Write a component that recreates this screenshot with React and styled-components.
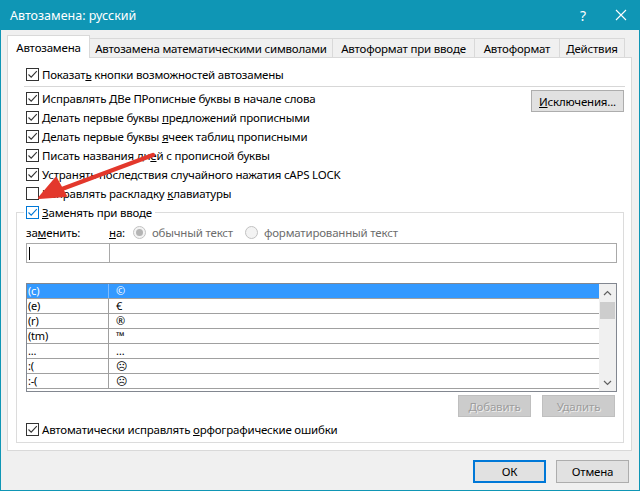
import React from 'react'
import styled, { createGlobalStyle } from 'styled-components'

const GlobalStyle = createGlobalStyle`
  html, body { margin: 0; padding: 0; background: #ffffff; }
  body {
    font-family: "Noto Sans", "Open Sans", sans-serif;
    font-size: 11.5px;
    letter-spacing: -0.2px;
    color: #000;
  }
  * { box-sizing: border-box; }
`

const Window = styled.div`
  width: 640px;
  height: 491px;
  display: flex;
  flex-direction: column;
  position: relative;
`

const TitleBar = styled.div`
  height: 30px;
  flex: none;
  background: #0f96b5;
  color: #fff;
  display: flex;
  align-items: center;
  padding-left: 10px;
  font-size: 12.5px;
  letter-spacing: 0;
`

const TitleText = styled.div`
  flex: 1;
`

const TitleButton = styled.div`
  width: 38px;
  height: 30px;
  display: flex;
  align-items: center;
  justify-content: center;
  font-size: 14px;
`

const Frame = styled.div`
  flex: 1;
  border: 1px solid #0f96b5;
  border-top: none;
  background: #f0f0f0;
  padding: 5px 7px 0 6px;
  display: flex;
  flex-direction: column;
`

const TabStrip = styled.div`
  display: flex;
  align-items: flex-end;
  height: 23px;
  position: relative;
  z-index: 1;
`

const Tab = styled.div`
  width: ${p => p.$w}px;
  height: ${p => (p.$active ? 23 : 20)}px;
  background: ${p => (p.$active ? '#fff' : '#f0f0f0')};
  border: 1px solid #d9d9d9;
  border-bottom: ${p => (p.$active ? 'none' : '1px solid #d9d9d9')};
  margin-left: ${p => (p.$first ? 0 : -1)}px;
  display: flex;
  align-items: center;
  justify-content: center;
  padding-top: ${p => (p.$active ? 0 : 1)}px;
  white-space: nowrap;
`

const Panel = styled.div`
  margin-top: -1px;
  height: 394px;
  background: #fff;
  border: 1px solid #d9d9d9;
  display: flex;
  flex-direction: column;
  position: relative;
`

const TopSection = styled.div`
  padding: 7px 6px 0 16px;
`

const Divider = styled.div`
  height: 1px;
  background: #d7d7d7;
  margin-top: 2px;
`

const Options = styled.div`
  margin-top: 2px;
  display: flex;
  justify-content: space-between;
  align-items: flex-start;
`

const OptionList = styled.div`
  display: flex;
  flex-direction: column;
`

const Row = styled.label`
  height: 19px;
  display: flex;
  align-items: center;
  padding-left: 2px;
  white-space: nowrap;
`

const Box = styled.span`
  width: 13px;
  height: 13px;
  flex: none;
  border: 1px solid ${p => (p.$accent ? '#0078d7' : '#333')};
  background: #fff;
  margin-right: 3px;
  display: flex;
  align-items: center;
  justify-content: center;
`

const Button = styled.div`
  width: ${p => p.$w}px;
  height: ${p => p.$h || 22}px;
  display: flex;
  align-items: center;
  justify-content: center;
  background: ${p => (p.$disabled ? '#cccccc' : '#e1e1e1')};
  border: ${p => (p.$default ? '2px solid #0078d7' : p.$disabled ? '1px solid #bfbfbf' : '1px solid #adadad')};
  color: ${p => (p.$disabled ? '#9d9d9d' : '#000')};
  text-shadow: ${p => (p.$disabled ? '1px 1px 0 #eeeeee' : 'none')};
  margin-top: ${p => p.$mt || 0}px;
  margin-right: ${p => p.$mr || 0}px;
`

const Group = styled.fieldset`
  margin: 0 7px 8px 8px;
  padding: 0 6px 3px 9px;
  border: 1px solid #dcdcdc;
  flex: 1;
  min-width: 0;
  display: flex;
  flex-direction: column;
`

const Legend = styled.legend`
  padding: 0 3px 0 2px;
  margin-left: -2px;
  height: 18px;
  display: flex;
  align-items: center;
`

const LabelRow = styled.div`
  height: 18px;
  margin-top: 2px;
  display: flex;
  align-items: center;
  white-space: nowrap;
`

const FieldLabel = styled.span`
  width: ${p => p.$w}px;
  flex: none;
`

const Radio = styled.span`
  width: 13px;
  height: 13px;
  border-radius: 50%;
  border: 1px solid #c2c2c2;
  background: #f3f3f3;
  margin: 0 6px 0 ${p => p.$ml}px;
  display: flex;
  align-items: center;
  justify-content: center;
  &::after {
    content: '';
    width: 7px;
    height: 7px;
    border-radius: 50%;
    background: ${p => (p.$on ? '#b4b4b4' : 'transparent')};
  }
`

const Muted = styled.span`
  color: #6d6d6d;
`

const Inputs = styled.div`
  margin-top: 2px;
  height: 20px;
  display: flex;
`

const Input = styled.div`
  height: 20px;
  width: ${p => (p.$w ? `${p.$w}px` : 'auto')};
  flex: ${p => (p.$w ? 'none' : 1)};
  border: 1px solid #a9a9a9;
  margin-left: ${p => (p.$join ? -1 : 0)}px;
  background: #fff;
  display: flex;
  align-items: center;
  padding-left: 2px;
`

const Caret = styled.span`
  width: 1px;
  height: 13px;
  background: #000;
`

const List = styled.div`
  margin-top: 20px;
  height: 109px;
  border: 1px solid #828790;
  display: flex;
  overflow: hidden;
`

const Rows = styled.div`
  flex: 1;
`

const ListRow = styled.div`
  height: 15px;
  display: flex;
  border-bottom: 1px solid #a0a0a0;
  background: ${p => (p.$selected ? '#3399ff' : '#fff')};
  color: ${p => (p.$selected ? '#fff' : '#000')};
  font-size: 11px;
  line-height: 14px;
  overflow: hidden;
`

const Cell = styled.div`
  width: ${p => (p.$w ? `${p.$w}px` : 'auto')};
  flex: ${p => (p.$w ? 'none' : 1)};
  padding-left: ${p => p.$pl}px;
  border-right: ${p => (p.$w ? `1px solid ${p.$sel ? '#7fbcff' : '#a0a0a0'}` : 'none')};
`

const Scrollbar = styled.div`
  width: 17px;
  flex: none;
  background: #f0f0f0;
  display: flex;
  flex-direction: column;
  align-items: center;
`

const ScrollArrow = styled.div`
  height: 17px;
  display: flex;
  align-items: center;
  justify-content: center;
`

const Thumb = styled.div`
  width: 15px;
  height: 17px;
  background: #cdcdcd;
  margin-top: 1px;
`

const Spacer = styled.div`
  flex: 1;
`

const ButtonRow = styled.div`
  display: flex;
  justify-content: flex-end;
  gap: 11px;
  margin-top: 3px;
  padding-right: 2px;
`

const BottomRow = styled(Row)`
  margin-top: 3px;
  padding-left: 0;
`

const Footer = styled.div`
  display: flex;
  justify-content: flex-end;
  gap: 10px;
  margin-top: 9px;
  padding-right: 3px;
`

const Arrow = styled.svg`
  position: absolute;
  left: 0;
  top: 0;
  pointer-events: none;
`

const Check = ({ on = true, accent }) => (
  <Box $accent={accent}>
    {on && (
      <svg width="11" height="11" viewBox="0 0 11 11">
        <path d="M1.5 5.5 L4.2 8.2 L9.8 2.2" fill="none" stroke={accent ? '#0078d7' : '#333'} strokeWidth="1.1" />
      </svg>
    )}
  </Box>
)

const Option = ({ on, accent, children }) => (
  <Row>
    <Check on={on} accent={accent} />
    <span>{children}</span>
  </Row>
)

const entries = [
  ['(c)', '©'],
  ['(e)', '€'],
  ['(r)', '®'],
  ['(tm)', '™'],
  ['...', '…'],
  [':(', '☹'],
  [':-(', '☹'],
]

const tabs = [
  ['Автозамена', 83],
  ['Автозамена математическими символами', 244],
  ['Автоформат при вводе', 143],
  ['Автоформат', 86],
  ['Действия', 66],
]

export default function App() {
  return (
    <>
      <GlobalStyle />
      <Window>
        <TitleBar>
          <TitleText>Автозамена: русский</TitleText>
          <TitleButton>?</TitleButton>
          <TitleButton>
            <svg width="12" height="12" viewBox="0 0 12 12">
              <path d="M1 1 L11 11 M11 1 L1 11" stroke="#fff" strokeWidth="1.1" />
            </svg>
          </TitleButton>
        </TitleBar>
        <Frame>
          <TabStrip>
            {tabs.map(([t, w], i) => (
              <Tab key={t} $w={w} $active={i === 0} $first={i === 0}>{t}</Tab>
            ))}
          </TabStrip>
          <Panel>
            <TopSection>
              <Option on>Показат<u>ь</u> кнопки возможностей автозамены</Option>
              <Divider />
              <Options>
                <OptionList>
                  <Option on>Исправлять ДВе ПРописные буквы в начале слова</Option>
                  <Option on>Делать первые буквы <u>п</u>редложений прописными</Option>
                  <Option on>Делать первые буквы <u>я</u>чеек таблиц прописными</Option>
                  <Option on>Писать названия дн<u>е</u>й с прописной буквы</Option>
                  <Option on>Устранять после<u>д</u>ствия случайного нажатия cAPS LOCK</Option>
                  <Option on={false}>Исправлять раскладку <u>к</u>лавиатуры</Option>
                </OptionList>
                <Button $w={93} $mt={1} $mr={1}><span><u>И</u>сключения...</span></Button>
              </Options>
            </TopSection>
            <Group>
              <Legend>
                <Check accent />
                <span><u>З</u>аменять при вводе</span>
              </Legend>
              <LabelRow>
                <FieldLabel $w={83}>за<u>м</u>енить:</FieldLabel>
                <span><u>н</u>а:</span>
                <Radio $on $ml={8} />
                <Muted>обычный текст</Muted>
                <Radio $ml={12} />
                <Muted>форматированный текст</Muted>
              </LabelRow>
              <Inputs>
                <Input $w={84}><Caret /></Input>
                <Input $join />
              </Inputs>
              <List>
                <Rows>
                  {entries.map(([a, b], i) => (
                    <ListRow key={a} $selected={i === 0}>
                      <Cell $w={82} $pl={1} $sel={i === 0}>{a}</Cell>
                      <Cell $pl={7}>{b}</Cell>
                    </ListRow>
                  ))}
                </Rows>
                <Scrollbar>
                  <ScrollArrow>
                    <svg width="9" height="6" viewBox="0 0 9 6">
                      <path d="M1 5 L4.5 1.5 L8 5" fill="none" stroke="#606060" strokeWidth="1.2" />
                    </svg>
                  </ScrollArrow>
                  <Thumb />
                  <Spacer />
                  <ScrollArrow>
                    <svg width="9" height="6" viewBox="0 0 9 6">
                      <path d="M1 1 L4.5 4.5 L8 1" fill="none" stroke="#606060" strokeWidth="1.2" />
                    </svg>
                  </ScrollArrow>
                </Scrollbar>
              </List>
              <ButtonRow>
                <Button $w={73} $disabled>Добавить</Button>
                <Button $w={73} $disabled>Удалить</Button>
              </ButtonRow>
              <BottomRow>
                <Check />
                <span>Автоматически исправлять <u>о</u>рфографические ошибки</span>
              </BottomRow>
            </Group>
          </Panel>
          <Footer>
            <Button $w={73} $h={23} $default>ОК</Button>
            <Button $w={73} $h={23}>Отмена</Button>
          </Footer>
        </Frame>
        <Arrow width="640" height="491" viewBox="0 0 640 491">
          <path d="M153 155 L62 189" stroke="#e3382c" strokeWidth="4.5" strokeLinecap="round" />
          <path d="M39 198 L56 178 L66 196 Z" fill="#e3382c" stroke="#e3382c" strokeWidth="2" strokeLinejoin="round" />
        </Arrow>
      </Window>
    </>
  )
}
